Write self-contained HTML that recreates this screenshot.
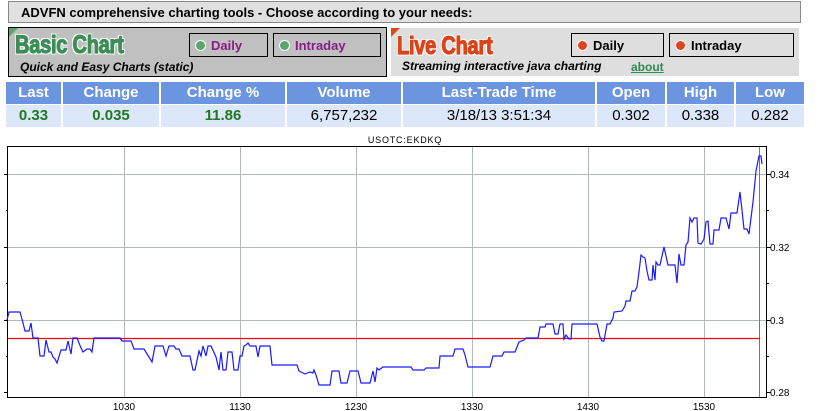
<!DOCTYPE html>
<html><head><meta charset="utf-8"><style>
*{margin:0;padding:0;box-sizing:border-box}
body{width:822px;height:411px;background:#fff;position:relative;font-family:"Liberation Sans",Arial,sans-serif;overflow:hidden}
.a{position:absolute}
.hdr{left:8px;top:1px;width:793px;height:22px;background:#e0e0e0;border:1px solid #888;font-weight:bold;font-size:13px;padding:3px 0 0 12px}
.box1{left:8px;top:27px;width:379px;height:50px;background:#c0c0c0;border:1px solid #000}
.box2{left:391px;top:28px;width:408px;height:48px;background:#dedede}
.tri{width:0;height:0;border-top:9px solid;border-right:9px solid transparent}
.big{font-weight:bold;font-size:25px;letter-spacing:-0.3px;transform:scaleX(0.8);transform-origin:left top;white-space:nowrap;-webkit-text-stroke:1.2px currentColor}
.btn{height:24px;border:1px solid #000;font-weight:bold;font-size:13px;padding:4px 0 0 21px}
.dot{position:absolute;left:5px;top:6px;width:11px;height:11px;border-radius:50%}
.sub{font-weight:bold;font-style:italic;font-size:12px;white-space:nowrap}
table{position:absolute;left:6px;top:82px;border-collapse:collapse}
td{text-align:center;border-right:2px solid #fff;padding:0}
tr.h td{background:#6b95df;color:#fff;font-weight:bold;font-size:15px;height:22px;border-bottom:1px solid #fff}
tr.d td{background:#dce8fa;font-size:15px;height:23px}
.g{color:#1f7a1f;font-weight:bold}
</style></head><body>
<div class="a hdr">ADVFN comprehensive charting tools - Choose according to your needs:</div>

<div class="a box1">
 <div class="a tri" style="left:0;top:0;border-top-color:#5aa56e"></div>
 <div class="a big" style="left:6px;top:3px;color:#3d8d57;text-shadow:-1.5px -1.5px 0 #fff,1.5px -1.5px 0 #fff,-1.5px 1.5px 0 #fff,1.5px 1.5px 0 #fff">Basic Chart</div>
 <div class="a sub" style="left:11px;top:32px">Quick and Easy Charts (static)</div>
 <div class="a btn" style="left:180px;top:5px;width:79px;color:#8a1a8a"><span class="dot" style="background:#5aa56e;border:1px solid #fff"></span>Daily</div>
 <div class="a btn" style="left:264px;top:5px;width:108px;color:#8a1a8a"><span class="dot" style="background:#5aa56e;border:1px solid #fff"></span>Intraday</div>
</div>

<div class="a box2">
 <div class="a tri" style="left:0;top:0;border-top-color:#e04a1a"></div>
 <div class="a big" style="left:6px;top:4px;color:#d9441a;text-shadow:-1.5px -1.5px 0 #fff,1.5px -1.5px 0 #fff,-1.5px 1.5px 0 #fff,1.5px 1.5px 0 #fff">Live Chart</div>
 <div class="a sub" style="left:11px;top:31px">Streaming interactive java charting</div>
 <div class="a" style="left:240px;top:32px;font-size:12px;font-weight:bold;color:#2e8b57;text-decoration:underline">about</div>
 <div class="a btn" style="left:180px;top:5px;width:93px;color:#000"><span class="dot" style="background:#e0441a;border:1px solid #fff"></span>Daily</div>
 <div class="a btn" style="left:278px;top:5px;width:125px;color:#000"><span class="dot" style="background:#e0441a;border:1px solid #fff"></span>Intraday</div>
</div>

<table>
<tr class="h"><td style="width:56px">Last</td><td style="width:98px">Change</td><td style="width:126px">Change %</td><td style="width:116px">Volume</td><td style="width:194px">Last-Trade Time</td><td style="width:70px">Open</td><td style="width:69px">High</td><td style="width:69px;border-right:0">Low</td></tr>
<tr class="d"><td class="g">0.33</td><td class="g">0.035</td><td class="g">11.86</td><td>6,757,232</td><td>3/18/13 3:51:34</td><td>0.302</td><td>0.338</td><td style="border-right:0">0.282</td></tr>
</table>

<svg class="a" style="left:0;top:0" width="822" height="411" xmlns="http://www.w3.org/2000/svg" font-family="Liberation Sans, Arial, sans-serif">
<text x="405" y="143" font-size="9" text-anchor="middle" letter-spacing="0.8">USOTC:EKDKQ</text>
<g stroke="#b0b8b8" stroke-width="1">
<line x1="7" y1="174.5" x2="767" y2="174.5"/><line x1="7" y1="247.5" x2="767" y2="247.5"/><line x1="7" y1="320.5" x2="767" y2="320.5"/>
<line x1="124.5" y1="146" x2="124.5" y2="398"/><line x1="240.5" y1="146" x2="240.5" y2="398"/><line x1="356.5" y1="146" x2="356.5" y2="398"/>
<line x1="472.5" y1="146" x2="472.5" y2="398"/><line x1="588.5" y1="146" x2="588.5" y2="398"/><line x1="704.5" y1="146" x2="704.5" y2="398"/>
</g>
<line x1="759.5" y1="146" x2="759.5" y2="398" stroke="#777"/>
<line x1="7" y1="338.5" x2="760" y2="338.5" stroke="#f00" stroke-width="1.3"/>
<rect x="7.5" y="146.5" width="759" height="251" fill="none" stroke="#000"/>
<g stroke="#000"><line x1="4" y1="174.5" x2="8" y2="174.5"/><line x1="6" y1="210.5" x2="8" y2="210.5"/><line x1="4" y1="247.5" x2="8" y2="247.5"/><line x1="6" y1="283.5" x2="8" y2="283.5"/><line x1="4" y1="320.5" x2="8" y2="320.5"/><line x1="6" y1="356.5" x2="8" y2="356.5"/><line x1="4" y1="392.5" x2="8" y2="392.5"/>
<line x1="767" y1="174.5" x2="771" y2="174.5"/><line x1="767" y1="210.5" x2="769" y2="210.5"/><line x1="767" y1="247.5" x2="771" y2="247.5"/><line x1="767" y1="283.5" x2="769" y2="283.5"/><line x1="767" y1="320.5" x2="771" y2="320.5"/><line x1="767" y1="356.5" x2="769" y2="356.5"/><line x1="767" y1="392.5" x2="771" y2="392.5"/></g>
<g font-size="10"><text x="770" y="178">0.34</text><text x="770" y="251">0.32</text><text x="770" y="324">0.3</text><text x="770" y="396">0.28</text></g>
<g font-size="10" text-anchor="middle"><text x="124" y="410">1030</text><text x="240" y="410">1130</text><text x="356" y="410">1230</text><text x="472" y="410">1330</text><text x="588" y="410">1430</text><text x="704" y="410">1530</text></g>
<polyline fill="none" stroke="#1a1aff" stroke-width="1.2" points="7,320 9,312 20,312 23,323 25,331 29,331 31,323 33,338 38,338 40,356 44,356 46,340 49,352 51,352 53,357 55,359 57,363 61,350 66,350 68,341 71,354 73,338 77,338 81,348 83,352 87,349 90,349 92,352 94,338 120,338 122,341 131,341 134,349 144,349 152,362 155,346 163,346 166,356 169,346 174,346 176,349 179,349 182,356 190,356 193,370 195,370 199,351 201,356 203,346 206,356 208,346 211,346 216,357 219,370 221,352 223,370 226,370 228,352 232,352 234,370 238,370 240,356 242,356 244,346 246,345 248,343 250,346 256,346 258,357 260,346 270,346 272,365 297,365 299,371 305,374 310,372 313,373 314,370 316,375 319,385 330,385 332,371 339,371 341,383 347,383 350,371 358,371 361,383 370,383 373,371 375,382 377,368 379,370 383,367 411,367 413,370 424,370 426,368 439,368 440,356 453,356 455,349 463,349 465,355 468,367 490,367 493,356 502,356 504,352 515,352 519,342 524,340 526,338 538,338 540,327 545,327 546,324 553,324 555,334 558,334 560,324 563,324 564,339 566,335 569,339 571,339 572,324 597,324 600,337 602,341 604,341 607,324 610,324 613,318 614,312 622,311 625,306 626,301 630,301 632,291 635,291 637,287 639,272 641,255 643,257 645,258 647,271 649,280 652,280 653,265 655,280 656,262 658,265 660,265 664,247 666,256 668,265 675,265 677,283 679,254 681,265 684,265 686,245 688,242 690,218 692,222 694,218 697,218 698,243 701,244 704,239 706,222 708,221 710,244 713,244 714,230 719,230 721,218 726,218 729,229 731,213 737,213 740,192 744,229 747,229 749,234 753,202 756,171 759,156 761,156 762,164"/>
</svg>
</body></html>
